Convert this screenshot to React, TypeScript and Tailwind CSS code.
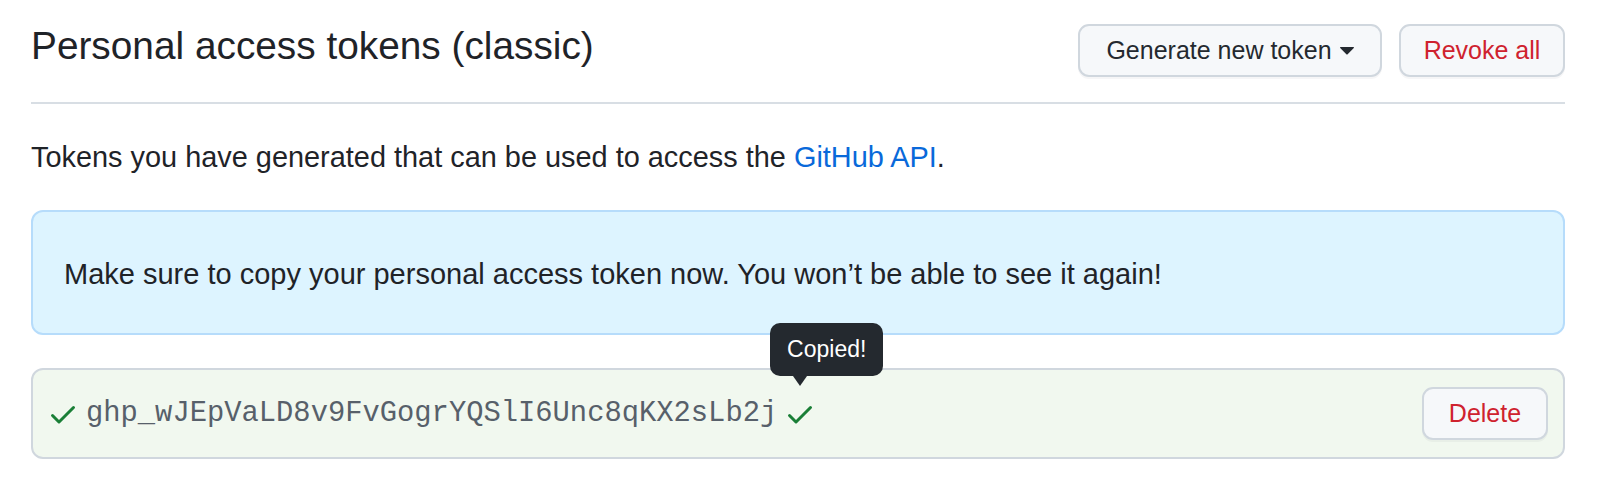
import React from 'react';

const token = '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';

function CheckIcon() {
  return (
    <svg width="32" height="32" viewBox="0 0 16 16" fill="#1a7f37" aria-hidden="true">
      <path d="M13.78 4.22a.75.75 0 0 1 0 1.06l-7.25 7.25a.75.75 0 0 1-1.06 0L2.22 9.28a.751.751 0 0 1 .018-1.042.751.751 0 0 1 1.042-.018L6 10.94l6.72-6.72a.75.75 0 0 1 1.06 0Z" />
    </svg>
  );
}

export default function App() {
  return (
    <div className="w-[1600px] h-[483px] bg-white pl-[31px] pr-[35px] font-['Liberation_Sans',Arial,sans-serif] text-[#1f2328]">
      {/* Header */}
      <div className="flex items-start justify-between pt-[22px] pb-[25px] border-b-2 border-[#d8dee4]">
        <h2 className="text-[38.8px] leading-[48px] font-normal">Personal access tokens (classic)</h2>
        <div className="flex gap-[17px] mt-[2px]">
          <button className="w-[304px] h-[53px] flex items-center justify-center gap-[8px] rounded-[11px] border-2 border-[#d0d7de] bg-[#f6f8fa] text-[25px] text-[#24292f] shadow-[0_2px_0_rgba(31,35,40,0.04)]">
            Generate new token
            <svg width="14" height="8" viewBox="0 0 14 8" fill="#24292f" aria-hidden="true">
              <path d="M0.6 0h12.8c.5 0 .8.6.4 1L7.4 7.4a.6.6 0 0 1-.8 0L.2 1C-.2.6.1 0 .6 0Z" />
            </svg>
          </button>
          <button className="w-[166px] h-[53px] flex items-center justify-center rounded-[11px] border-2 border-[#d0d7de] bg-[#f6f8fa] text-[25px] text-[#cf222e] shadow-[0_2px_0_rgba(31,35,40,0.04)]">
            Revoke all
          </button>
        </div>
      </div>

      <p className="mt-[32px] text-[28.9px] leading-[42px]">
        Tokens you have generated that can be used to access the{' '}
        <a className="text-[#0969da]">GitHub API</a>.
      </p>

      {/* Flash notice */}
      <div className="mt-[32px] rounded-[12px] border-2 border-[#b6dcfb] bg-[#ddf4ff] pl-[31px] pt-[41px] pb-[38px] text-[29px] leading-[42px]">
        Make sure to copy your personal access token now. You won’t be able to see it again!
      </div>

      {/* New token row */}
      <div className="mt-[33px] flex items-center justify-between rounded-[12px] border-2 border-[#d0d7de] bg-[#f1f8ef] pl-[14px] pr-[15px] py-[17px]">
        <div className="flex items-center gap-[7px]">
          <CheckIcon />
          <code className="font-['Liberation_Mono','Courier_New',monospace] text-[28.8px] text-[#57606a]">
            {token}
          </code>
          <span className="relative flex">
            <CheckIcon />
            <div className="absolute left-[-14px] top-[-75px] w-[113px] h-[53px] rounded-[10px] bg-[#24292f] text-white text-[23px] flex items-center justify-center">
              Copied!
            </div>
            <div className="absolute left-[9px] top-[-22px] w-0 h-0 border-x-[7px] border-x-transparent border-t-[10px] border-t-[#24292f]" />
          </span>
        </div>
        <button className="w-[126px] h-[53px] flex items-center justify-center rounded-[11px] border-2 border-[#d0d7de] bg-[#f6f8fa] text-[25px] text-[#cf222e] shadow-[0_2px_0_rgba(31,35,40,0.04)]">
          Delete
        </button>
      </div>
    </div>
  );
}
